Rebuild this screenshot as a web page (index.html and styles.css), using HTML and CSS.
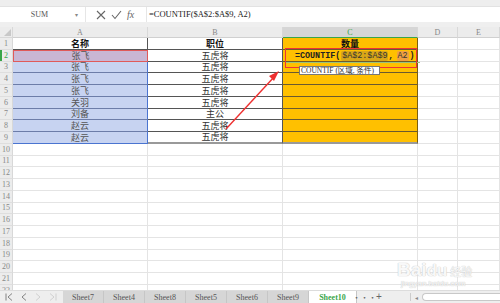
FILE: index.html
```html
<!DOCTYPE html>
<html>
<head>
<meta charset="utf-8">
<link rel="stylesheet" href="styles.css">
</head>
<body>
<div class="app">
  <div class="topstrip"></div>
  <div class="fbar">
    <div class="namebox"><span class="nb-text">SUM</span><span class="nb-arrow">▾</span></div>
    <div class="ficons">
      <svg width="10" height="10" viewBox="0 0 10 10"><path d="M1 1L9 9M9 1L1 9" stroke="#666" stroke-width="1.1" fill="none"/></svg>
      <svg width="11" height="10" viewBox="0 0 11 10"><path d="M1 5L4 8.5L10 1" stroke="#666" stroke-width="1.1" fill="none"/></svg>
      <span class="fx">fx</span>
    </div>
    <div class="ftext">=COUNTIF($A$2:$A$9, A2)</div>
  </div>
  <div class="gap"></div>
  <div class="sheet">
    <div class="corner"><svg width="7" height="7" viewBox="0 0 7 7"><path d="M7 0L7 7L0 7Z" fill="#c8c8c8"/></svg></div>
    <div class="ch">A</div>
    <div class="ch">B</div>
    <div class="ch ch-sel">C</div>
    <div class="ch">D</div>
    <div class="ch">E</div>

    <div class="rh">1</div>
    <div class="c t hd">名称</div><div class="c t hd">职位</div><div class="c t o hd">数量</div><div class="c"></div><div class="c"></div>

    <div class="rh rh-sel">2</div>
    <div class="c t a2">张飞</div><div class="c t">五虎将</div><div class="c t o"></div><div class="c"></div><div class="c"></div>

    <div class="rh">3</div>
    <div class="c t bl">张飞</div><div class="c t">五虎将</div><div class="c t o"></div><div class="c"></div><div class="c"></div>

    <div class="rh">4</div>
    <div class="c t bl">张飞</div><div class="c t">五虎将</div><div class="c t o"></div><div class="c"></div><div class="c"></div>

    <div class="rh">5</div>
    <div class="c t bl">张飞</div><div class="c t">五虎将</div><div class="c t o"></div><div class="c"></div><div class="c"></div>

    <div class="rh">6</div>
    <div class="c t bl">关羽</div><div class="c t">五虎将</div><div class="c t o"></div><div class="c"></div><div class="c"></div>

    <div class="rh">7</div>
    <div class="c t bl">刘备</div><div class="c t">主公</div><div class="c t o"></div><div class="c"></div><div class="c"></div>

    <div class="rh">8</div>
    <div class="c t bl">赵云</div><div class="c t">五虎将</div><div class="c t o"></div><div class="c"></div><div class="c"></div>

    <div class="rh">9</div>
    <div class="c t bl last">赵云</div><div class="c t lastb">五虎将</div><div class="c t o lastb"></div><div class="c"></div><div class="c"></div>

    <div class="rh">10</div><div class="c"></div><div class="c"></div><div class="c"></div><div class="c"></div><div class="c"></div>
    <div class="rh">11</div><div class="c"></div><div class="c"></div><div class="c"></div><div class="c"></div><div class="c"></div>
    <div class="rh">12</div><div class="c"></div><div class="c"></div><div class="c"></div><div class="c"></div><div class="c"></div>
    <div class="rh">13</div><div class="c"></div><div class="c"></div><div class="c"></div><div class="c"></div><div class="c"></div>
    <div class="rh">14</div><div class="c"></div><div class="c"></div><div class="c"></div><div class="c"></div><div class="c"></div>
    <div class="rh">15</div><div class="c"></div><div class="c"></div><div class="c"></div><div class="c"></div><div class="c"></div>
    <div class="rh">16</div><div class="c"></div><div class="c"></div><div class="c"></div><div class="c"></div><div class="c"></div>
    <div class="rh">17</div><div class="c"></div><div class="c"></div><div class="c"></div><div class="c"></div><div class="c"></div>
    <div class="rh">18</div><div class="c"></div><div class="c"></div><div class="c"></div><div class="c"></div><div class="c"></div>
    <div class="rh">19</div><div class="c"></div><div class="c"></div><div class="c"></div><div class="c"></div><div class="c"></div>
    <div class="rh">20</div><div class="c"></div><div class="c"></div><div class="c"></div><div class="c"></div><div class="c"></div>
    <div class="rh">21</div><div class="c"></div><div class="c"></div><div class="c"></div><div class="c"></div><div class="c"></div>
    <div class="rh">22</div><div class="c"></div><div class="c"></div><div class="c"></div><div class="c"></div><div class="c"></div>

    <div class="editbox">
      <span class="ef">=COUNTIF(</span><span class="ref1">$A$2:$A$9</span><span class="ef">,</span><span class="ref2">A2</span><span class="ef">)</span>
    </div>
    <div class="redbox"></div>
    <div class="tip">COUNTIF (区域, 条件)</div>
    <svg class="arrow" width="70" height="70" viewBox="0 0 70 70">
      <path d="M4 62L53 9" stroke="#ee3030" stroke-width="1.4" fill="none"/>
      <path d="M57 4L47 9L52 14Z" fill="#ee3030"/>
    </svg>
    <div class="wm"><span class="wm-big">Bai</span><span class="wm-paw">du</span><span class="wm-cn">经验</span><div class="wm-url">jingyan.baidu.com</div></div>
  </div>
  <div class="tabs">
    <div class="nav">
      <svg width="8" height="8" viewBox="0 0 8 8"><path d="M1 0.5V7.5M7 0.5L3 4L7 7.5" stroke="#777" stroke-width="0.9" fill="none"/></svg>
      <svg width="6" height="8" viewBox="0 0 6 8"><path d="M5 0.5L1 4L5 7.5" stroke="#777" stroke-width="0.9" fill="none"/></svg>
      <svg width="6" height="8" viewBox="0 0 6 8"><path d="M1 0.5L5 4L1 7.5" stroke="#ccc" stroke-width="0.9" fill="none"/></svg>
      <svg width="8" height="8" viewBox="0 0 8 8"><path d="M7 0.5V7.5M1 0.5L5 4L1 7.5" stroke="#ccc" stroke-width="0.9" fill="none"/></svg>
    </div>
    <div class="tab">Sheet7</div>
    <div class="tab">Sheet4</div>
    <div class="tab">Sheet8</div>
    <div class="tab">Sheet5</div>
    <div class="tab">Sheet6</div>
    <div class="tab">Sheet9</div>
    <div class="tab active">Sheet10</div>
    <div class="more">···</div>
    <div class="plus">+</div>
    <div class="hs">
      <span class="hs-sep"></span>
      <span class="hs-arr">◂</span>
      <span class="hs-bar"></span>
    </div>
  </div>
</div>
</body>
</html>
```
FILE: styles.css
```css
* { box-sizing: border-box; }
html, body { margin: 0; padding: 0; }
body {
  width: 500px; height: 303px; overflow: hidden;
  font-family: "Noto Sans CJK SC", "Liberation Sans", sans-serif;
  background: #fff;
}
.app { width: 500px; height: 303px; display: flex; flex-direction: column; }
.topstrip { height: 7px; background: #eeeeee; border-bottom: 1px solid #e2e2e2; }
.fbar { height: 15px; display: flex; align-items: center; background: #fff; }
.namebox { width: 86px; height: 15px; display: flex; align-items: center; border-right: 1px solid #e6e6e6; }
.nb-text { flex: 1; text-align: center; font-family: "Liberation Serif", serif; font-size: 8px; color: #555; padding-left: 4px; }
.nb-arrow { font-size: 6px; color: #888; width: 10px; }
.ficons { display: flex; align-items: center; gap: 5px; padding-left: 10px; width: 60px; }
.fx { font-family: "Liberation Serif", serif; font-style: italic; font-size: 10px; color: #666; }
.ftext { flex: 1; font-family: "Liberation Serif", serif; font-size: 8.5px; color: #222; padding-left: 2px; border-left: 1px solid #e6e6e6; height: 15px; line-height: 15px; }
.gap { height: 5px; background: #efefef; }
.sheet {
  position: relative;
  flex: 1;
  display: grid;
  grid-template-columns: 13px 135px 135px 135px 40px 42px;
  grid-template-rows: 11px repeat(22, 11.75px);
  overflow: hidden;
  background: #fff;
}
.corner { background: #ececec; border-right: 1px solid #d8d8d8; border-bottom: 1px solid #d8d8d8; display: flex; align-items: flex-end; justify-content: flex-end; padding: 1px; }
.ch { background: #ececec; border-right: 1px solid #d8d8d8; border-bottom: 1px solid #d0d0d0; font-family: "Liberation Serif", serif; font-size: 8px; color: #888; text-align: center; line-height: 11px; }
.ch-sel { background: #d6d6d6; color: #3aa64a; border-bottom: 1.5px solid #3aa64a; }
.rh { background: #ececec; border-right: 1px solid #d8d8d8; border-bottom: 1px solid #dedede; font-family: "Liberation Serif", serif; font-size: 8px; color: #888; display: flex; align-items: center; justify-content: center; }
.rh-sel { color: #3aa64a; box-shadow: inset 2px 0 0 #3aa64a; }
.c { border-right: 1px solid #e4e4e4; border-bottom: 1px solid #e4e4e4; }
.t { border-right: 1px solid #555; border-bottom: 1px solid #555; font-size: 9px; line-height: 1; display: flex; align-items: center; justify-content: center; color: #333; white-space: nowrap; overflow: hidden; }
.hd { font-weight: bold; color: #111; }
.o { background: #ffc000; border-right: 1px solid #7a5e10; border-bottom: 1px solid #6a5a30; }
.bl { background: #c7d3f1; color: #555; border-right: 1.5px solid #4a74d0; border-bottom: 1px solid #6c7ca8; }
.a2 { background: #c9b6d4; color: #555; border: 1px solid #e05a5a; }
.last { border-bottom: 1.5px solid #4a74d0; }
.lastb { border-bottom: 2px solid #999; }
.editbox {
  position: absolute; left: 285px; top: 23px; width: 135px; height: 13px;
  border-bottom: 1px solid #9bc47a;
  display: flex; align-items: center; padding-left: 10px;
  font-family: "Liberation Mono", monospace; font-size: 8.4px; font-weight: bold; color: #222; white-space: nowrap;
}
.ref1 { background: #d9a618; border-radius: 2px; padding: 0 1px; margin-left: 1px; color: #333; font-weight: normal; }
.ref2 { background: #f0a040; border-radius: 2px; padding: 0 1px; margin: 0 1px 0 3px; color: #333; font-weight: normal; }
.redbox { position: absolute; left: 285px; top: 21px; width: 132px; height: 20px; border: 1.5px solid #ee3434; }
.tip { position: absolute; left: 299px; top: 39px; width: 81px; height: 9px; background: #fff; border: 1px solid #777; font-size: 7.5px; line-height: 7px; color: #333; padding-left: 1px; white-space: nowrap; overflow: hidden; font-family: "Liberation Serif", "Noto Sans CJK SC", serif; }
.arrow { position: absolute; left: 222px; top: 40px; }
.wm { position: absolute; left: 397px; top: 233px; color: rgba(255,255,255,0.9); text-shadow: 0 0 1px #c8c8c8, 0 0 1px #c8c8c8; line-height: 1; }
.wm-big { font-family: "Liberation Sans", sans-serif; font-size: 19px; font-weight: bold; }
.wm-paw { font-family: "Liberation Sans", sans-serif; font-size: 17px; font-weight: bold; }
.wm-cn { font-size: 11px; margin-left: 3px; }
.wm-url { font-family: "Liberation Sans", sans-serif; font-size: 8px; margin-top: 1px; padding-left: 4px; }
.tabs { height: 13px; display: flex; align-items: stretch; background: #eeeeee; border-top: 1px solid #dcdcdc; }
.nav { width: 63px; display: flex; align-items: center; gap: 8px; padding-left: 5px; }
.tab { width: 41px; background: #d6d6d6; border-right: 1px solid #c6c6c6; font-family: "Liberation Serif", serif; font-size: 8px; color: #555; display: flex; align-items: center; justify-content: center; }
.tab.active { background: #fff; color: #3aa64a; font-weight: bold; width: 48px; }
.more { width: 15px; display: flex; align-items: center; justify-content: center; font-size: 8px; color: #666; }
.plus { width: 14px; display: flex; align-items: center; justify-content: center; font-family: "Liberation Sans", sans-serif; font-size: 10px; line-height: 1; color: #666; }
.hs { flex: 1; display: flex; align-items: center; padding-left: 24px; gap: 4px; }
.hs-sep { width: 1px; height: 8px; background: #ccc; }
.hs-arr { font-size: 6px; color: #888; }
.hs-bar { flex: 1; height: 8px; border: 1px solid #c8c8c8; border-right: none; border-radius: 4px 0 0 4px; background: #fff; }
```
